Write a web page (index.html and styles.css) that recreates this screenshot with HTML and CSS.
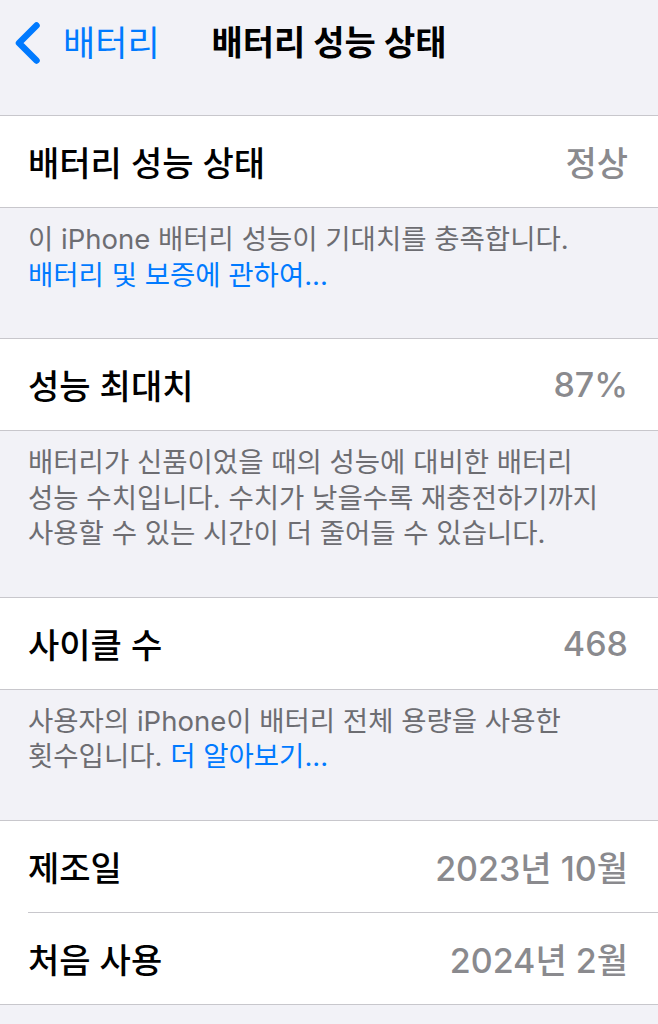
FILE: index.html
```html
<!DOCTYPE html>
<html lang="ko">
<head>
<meta charset="utf-8">
<link rel="stylesheet" href="styles.css">
</head>
<body>
<header class="nav">
  <div class="back">
    <svg class="chev" width="26" height="46" viewBox="0 0 26 46"><path d="M22.5 5.5 L5 23 L22.5 40.5" fill="none" stroke="#007aff" stroke-width="6.5" stroke-linecap="round" stroke-linejoin="round"/></svg>
    <span class="back-text">배터리</span>
  </div>
  <div class="title">배터리 성능 상태</div>
  <div></div>
</header>

<section class="group">
  <div class="row"><span class="label">배터리 성능 상태</span><span class="value">정상</span></div>
</section>
<p class="foot">이 iPhone 배터리 성능이 기대치를 충족합니다.<br><span class="link">배터리 및 보증에 관하여...</span></p>

<section class="group">
  <div class="row"><span class="label">성능 최대치</span><span class="value">87%</span></div>
</section>
<p class="foot">배터리가 신품이었을 때의 성능에 대비한 배터리<br>성능 수치입니다. 수치가 낮을수록 재충전하기까지<br>사용할 수 있는 시간이 더 줄어들 수 있습니다.</p>

<section class="group">
  <div class="row"><span class="label">사이클 수</span><span class="value">468</span></div>
</section>
<p class="foot">사용자의 iPhone이 배터리 전체 용량을 사용한<br>횟수입니다. <span class="link">더 알아보기...</span></p>

<section class="group">
  <div class="row"><span class="label">제조일</span><span class="value">2023년 10월</span></div>
  <div class="row"><span class="label">처음 사용</span><span class="value">2024년 2월</span></div>
</section>
</body>
</html>
```

FILE: styles.css
```css
html, body {
  margin: 0;
  padding: 0;
}
body {
  background: #f2f2f7;
  font-family: "Inter", "Noto Sans CJK KR", "Noto Sans", sans-serif;
  color: #000;
  width: 658px;
}
.nav {
  height: 86px;
  margin-bottom: 29px;
  display: grid;
  grid-template-columns: 1fr auto 1fr;
  align-items: center;
}
.back {
  display: flex;
  align-items: center;
  padding-left: 14px;
}
.chev {
  display: block;
  margin-right: 23px;
}
.back-text {
  color: #007aff;
  font-size: 35px;
  line-height: 1;
}
.title {
  font-size: 34px;
  font-weight: 700;
  line-height: 1;
}
.group {
  background: #fff;
  border-top: 1px solid #c8c7cc;
  border-bottom: 1px solid #c8c7cc;
}
.row {
  height: 91px;
  display: flex;
  align-items: center;
  justify-content: space-between;
  padding: 0 30px 0 28px;
}
.row + .row {
  border-top: 1px solid #c8c7cc;
  margin-left: 28px;
  padding-left: 0;
}
.label {
  font-size: 34px;
  font-weight: 500;
}
.value {
  font-size: 34px;
  font-weight: 500;
  color: #8a8a8e;
}
.foot {
  margin: 0;
  padding: 14px 28px 45px;
  font-size: 27.5px;
  line-height: 35.5px;
  color: #6d6d72;
}
.link {
  color: #007aff;
}
```
